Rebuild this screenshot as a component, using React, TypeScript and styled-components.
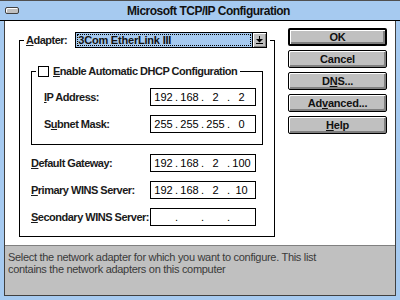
import React from "react";
import styled, { createGlobalStyle } from "styled-components";

const Global = createGlobalStyle`
  html, body { margin: 0; padding: 0; background: #fff; }
  body {
    width: 400px; height: 300px; overflow: hidden;
    font-family: "Liberation Sans", Arial, sans-serif;
  }
`;

const Window = styled.div`
  width: 400px;
  height: 300px;
  box-sizing: border-box;
  display: flex;
  flex-direction: column;
  background: #a6caf0;
`;

const TitleBar = styled.div`
  height: 21px;
  box-sizing: border-box;
  border-top: 1px solid #505050;
  border-bottom: 1px solid #000;
  display: flex;
  align-items: center;
`;

const ControlBox = styled.span`
  margin-left: 5px;
  width: 14px;
  height: 7px;
  box-sizing: border-box;
  border: 1px solid #404040;
  background: #c0c0c0;
  box-shadow: inset 1px 1px #fff;
  border-radius: 2px;
`;

const Title = styled.div`
  flex: 1;
  text-align: center;
  font-size: 12px;
  font-weight: bold;
  letter-spacing: -0.5px;
  color: #111;
  padding-right: 2px;
`;

const Frame = styled.div`
  flex: 1;
  display: flex;
  padding: 0 4px 4px 4px;
  min-height: 0;
`;

const Client = styled.div`
  flex: 1;
  display: flex;
  flex-direction: column;
  background: #fff;
  border: 1px solid #404040;
  border-top: none;
`;

const Main = styled.div`
  flex: 1;
  display: flex;
  align-items: flex-start;
  padding: 7px 0 0 14px;
`;

const Group = styled.div`
  position: relative;
  margin-top: 12px;
  width: 256px;
  height: 197px;
  box-sizing: border-box;
  border: 1px solid #000;
  padding-top: 30px;
  display: flex;
  flex-direction: column;
`;

const Legend = styled.div<{ $top: number; $left: number }>`
  position: absolute;
  top: ${(p) => p.$top}px;
  left: ${(p) => p.$left}px;
  background: #fff;
  display: flex;
  align-items: center;
  padding: 0 3px 0 2px;
`;

const InnerGroup = styled.div`
  position: relative;
  margin: 0 11px 9px 11px;
  height: 74px;
  box-sizing: border-box;
  border: 1px solid #000;
  padding-top: 16px;
  display: flex;
  flex-direction: column;
  gap: 9px;
`;

const Rows = styled.div`
  display: flex;
  flex-direction: column;
  gap: 9px;
`;

const Row = styled.div<{ $inner?: boolean }>`
  display: flex;
  align-items: center;
  height: 18px;
  padding: ${(p) => (p.$inner ? "0 6px 0 12px" : "0 18px 0 11px")};
`;

const Label = styled.span`
  flex: 1;
  font-size: 11px;
  font-weight: bold;
  letter-spacing: -0.5px;
  color: #1a1a1a;
  white-space: nowrap;
`;

const IpBox = styled.div`
  width: 106px;
  height: 18px;
  box-sizing: border-box;
  border: 1px solid #000;
  display: flex;
  align-items: center;
  padding-left: 1px;
  font-size: 11px;
  color: #000;
`;

const Field = styled.span`
  width: 23px;
  text-align: center;
`;

const Dot = styled.span`
  width: 3px;
  text-align: center;
`;

const Combo = styled.div`
  margin-left: 8px;
  width: 192px;
  height: 16px;
  box-sizing: border-box;
  border: 1px solid #000;
  display: flex;
`;

const ComboText = styled.div`
  flex: 1;
  background: #a6caf0;
  outline: 1px dotted #000;
  outline-offset: -2px;
  font-size: 11px;
  font-weight: bold;
  letter-spacing: -0.2px;
  line-height: 14px;
  padding-left: 2px;
  color: #111;
`;

const ComboButton = styled.div`
  width: 14px;
  box-sizing: border-box;
  border-left: 1px solid #000;
  background: #c0c0c0;
  box-shadow: inset 1px 1px #fff, inset -1px -1px #808080;
  display: flex;
  align-items: center;
  justify-content: center;
`;

const CheckBox = styled.span`
  width: 11px;
  height: 11px;
  box-sizing: border-box;
  border: 1px solid #000;
  background: #fff;
  margin-right: 4px;
`;

const Buttons = styled.div`
  margin-left: 13px;
  display: flex;
  flex-direction: column;
  gap: 4px;
`;

const Button = styled.div<{ $default?: boolean }>`
  width: 99px;
  height: 18px;
  box-sizing: border-box;
  border: ${(p) => (p.$default ? "2px" : "1px")} solid #000;
  border-radius: 2px;
  background: #c0c0c0;
  box-shadow: inset 1px 1px #fff, inset -2px -2px #808080;
  display: flex;
  align-items: center;
  justify-content: center;
  font-size: 11px;
  font-weight: bold;
  letter-spacing: -0.2px;
  color: #111;
`;

const Status = styled.div`
  height: 44px;
  border-top: 1px solid #808080;
  background: #c0c0c0;
  padding: 5px 0 0 3px;
  font-size: 11px;
  letter-spacing: -0.3px;
  line-height: 12px;
  color: #3a3a3a;
`;

const Ip = ({ v }: { v: string[] }) => (
  <IpBox>
    <Field>{v[0]}</Field>
    <Dot>.</Dot>
    <Field>{v[1]}</Field>
    <Dot>.</Dot>
    <Field>{v[2]}</Field>
    <Dot>.</Dot>
    <Field>{v[3]}</Field>
  </IpBox>
);

const ArrowIcon = () => (
  <svg width="7" height="9" viewBox="0 0 7 9">
    <rect x="3" y="0" width="1" height="3" fill="#000" />
    <polygon points="0,3 7,3 3.5,6.5" fill="#000" />
    <rect x="0" y="7" width="7" height="1" fill="#000" />
  </svg>
);

export default function App() {
  return (
    <>
      <Global />
      <Window>
        <TitleBar>
          <ControlBox />
          <Title>Microsoft TCP/IP Configuration</Title>
        </TitleBar>
        <Frame>
          <Client>
            <Main>
              <Group>
                <Legend $top={-9} $left={4}>
                  <Label>
                    <u>A</u>dapter:
                  </Label>
                  <Combo>
                    <ComboText>3Com EtherLink III</ComboText>
                    <ComboButton>
                      <ArrowIcon />
                    </ComboButton>
                  </Combo>
                </Legend>
                <InnerGroup>
                  <Legend $top={-7} $left={4}>
                    <CheckBox />
                    <Label>
                      <u>E</u>nable Automatic DHCP Configuration
                    </Label>
                  </Legend>
                  <Row $inner>
                    <Label>
                      <u>I</u>P Address:
                    </Label>
                    <Ip v={["192", "168", "2", "2"]} />
                  </Row>
                  <Row $inner>
                    <Label>
                      S<u>u</u>bnet Mask:
                    </Label>
                    <Ip v={["255", "255", "255", "0"]} />
                  </Row>
                </InnerGroup>
                <Rows>
                  <Row>
                    <Label>
                      <u>D</u>efault Gateway:
                    </Label>
                    <Ip v={["192", "168", "2", "100"]} />
                  </Row>
                  <Row>
                    <Label>
                      <u>P</u>rimary WINS Server:
                    </Label>
                    <Ip v={["192", "168", "2", "10"]} />
                  </Row>
                  <Row>
                    <Label>
                      <u>S</u>econdary WINS Server:
                    </Label>
                    <Ip v={["", "", "", ""]} />
                  </Row>
                </Rows>
              </Group>
              <Buttons>
                <Button $default>OK</Button>
                <Button>Cancel</Button>
                <Button>
                  D<u>N</u>S...
                </Button>
                <Button>
                  Ad<u>v</u>anced...
                </Button>
                <Button>
                  <u>H</u>elp
                </Button>
              </Buttons>
            </Main>
            <Status>
              Select the network adapter for which you want to configure. This list
              <br />
              contains the network adapters on this computer
            </Status>
          </Client>
        </Frame>
      </Window>
    </>
  );
}
